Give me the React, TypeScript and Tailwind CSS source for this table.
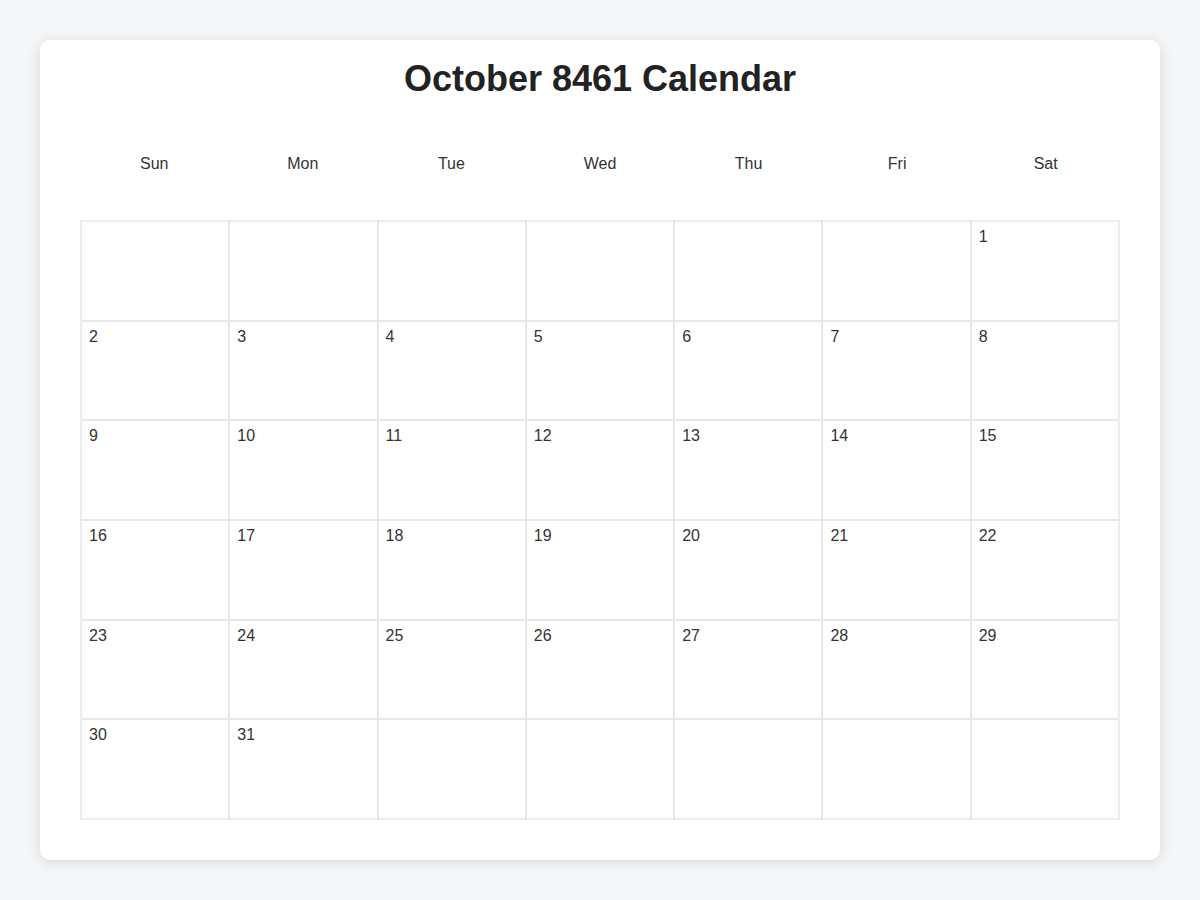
const days = ['Sun', 'Mon', 'Tue', 'Wed', 'Thu', 'Fri', 'Sat']

// October 8461 starts on a Saturday, 31 days
const firstDay = 6
const daysInMonth = 31

function buildCells() {
  const cells: (number | null)[] = []
  for (let i = 0; i < firstDay; i++) cells.push(null)
  for (let d = 1; d <= daysInMonth; d++) cells.push(d)
  while (cells.length < 42) cells.push(null)
  return cells
}

export default function App() {
  const cells = buildCells()

  return (
    <div
      className="min-h-screen bg-[#f5f6f8] p-[40px] text-[#333]"
      style={{ fontFamily: '"Liberation Sans", Arial, Helvetica, sans-serif' }}
    >
      <div className="bg-white rounded-[10px] shadow-[0_2px_14px_rgba(0,0,0,0.13)] px-[40px] pt-[18px] pb-[40px]">
        <h1 className="text-center text-[36px] leading-[41px] font-bold text-[#222]">
          October 8461 Calendar
        </h1>

        <div className="grid grid-cols-7 mt-[43px]">
          {days.map((d) => (
            <div key={d} className="text-center text-[16px] leading-[20px] py-[12px]">
              {d}
            </div>
          ))}
        </div>

        <div className="grid grid-cols-7 grid-rows-6 h-[600px] mt-[34px] border border-[#f0f0f0]">
          {cells.map((d, i) => (
            <div
              key={i}
              className="border border-[#e8e8e8] pl-[7px] pr-[6px] pt-[5px] text-[16px] leading-[20px]"
            >
              {d ?? ''}
            </div>
          ))}
        </div>
      </div>
    </div>
  )
}
